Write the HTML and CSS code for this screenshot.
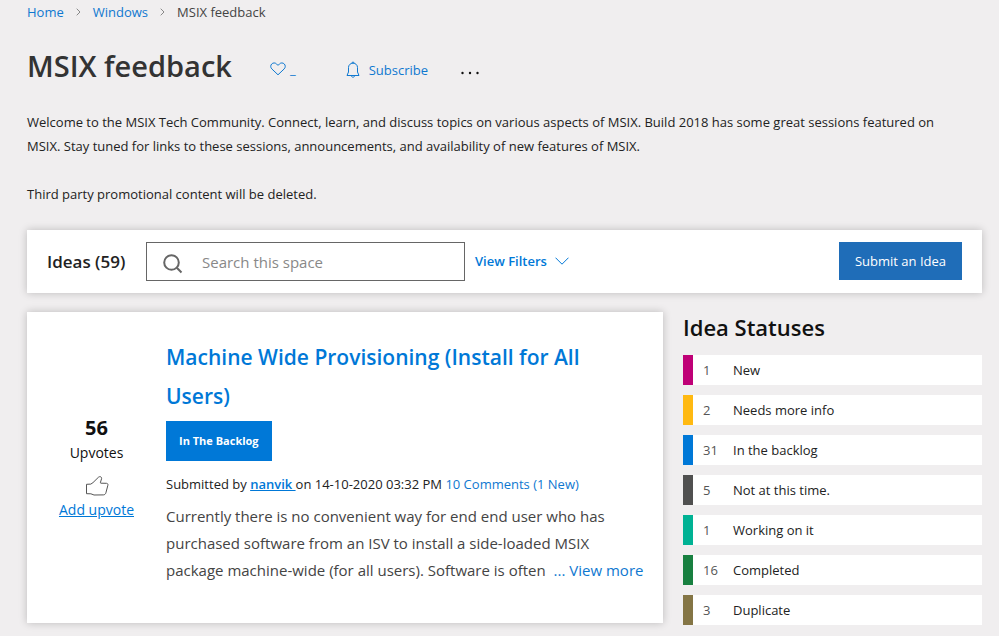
FILE: index.html
```html
<!DOCTYPE html>
<html lang="en">
<head>
<meta charset="utf-8">
<meta name="viewport" content="width=device-width, initial-scale=1">
<title>MSIX feedback</title>
<link rel="stylesheet" href="styles.css">
</head>
<body>
<header class="page-header">
  <nav class="breadcrumb" aria-label="Breadcrumb">
    <a href="#">Home</a>
    <svg width="5" height="8" viewBox="0 0 5 8" aria-hidden="true"><path d="M.7.7 4 4 .7 7.3"/></svg>
    <a href="#">Windows</a>
    <svg width="5" height="8" viewBox="0 0 5 8" aria-hidden="true"><path d="M.7.7 4 4 .7 7.3"/></svg>
    <span>MSIX feedback</span>
  </nav>
  <div class="title-row">
    <h1>MSIX feedback</h1>
    <a class="like" href="#">
      <svg width="16" height="14" viewBox="0 0 16 14" aria-hidden="true"><path d="M8 12.8 1.8 6.9C.4 5.4.4 3.3 1.7 2 3 .6 5.2.6 6.5 1.9L8 3.4l1.5-1.5C10.8.6 13 .6 14.3 2c1.3 1.3 1.3 3.4-.1 4.9z"/></svg>
      <span>_</span>
    </a>
    <a class="subscribe" href="#">
      <svg width="14" height="18" viewBox="0 0 14 18" aria-hidden="true"><path d="M1 14.5h12L11.5 11V6.5C11.5 4 9.6 2.2 7 2.2S2.5 4 2.5 6.5V11zM5.800 2.200C5.800.7 8.200.7 8.200 2.200M5.300 14.700c.3 2 3.100 2 3.400 0"/></svg>
      <span>Subscribe</span>
    </a>
    <button class="more" type="button" aria-label="More options">
      <svg width="20" height="4" viewBox="0 0 20 4" aria-hidden="true"><circle cx="2.500" cy="2" r="1.200"/><circle cx="10" cy="2" r="1.200"/><circle cx="17.500" cy="2" r="1.200"/></svg>
    </button>
  </div>
  <div class="intro">
    <p>Welcome to the MSIX Tech Community. Connect, learn, and discuss topics on various aspects of MSIX. Build 2018 has some great sessions featured on MSIX. Stay tuned for links to these sessions, announcements, and availability of new features of MSIX.</p>
    <p>Third party promotional content will be deleted.</p>
  </div>
</header>
<main>
  <section class="toolbar card">
    <h2>Ideas (59)</h2>
    <label class="search">
      <svg width="20" height="20" viewBox="0 0 20 20" aria-hidden="true"><circle cx="8.500" cy="8.500" r="7.300"/><path d="m13.800 13.800 4.700 4.700"/></svg>
      <input type="search" placeholder="Search this space" aria-label="Search this space">
    </label>
    <button class="filters" type="button">View Filters
      <svg width="14" height="8" viewBox="0 0 14 8" aria-hidden="true"><path d="m.5.7 6.500 6.500L13.500.7"/></svg>
    </button>
    <button class="submit" type="button">Submit an Idea</button>
  </section>
  <div class="columns">
    <article class="idea card">
      <div class="votes">
        <strong>56</strong>
        <span>Upvotes</span>
        <svg width="24" height="20" viewBox="0 0 24 20" aria-hidden="true"><path d="M1.500 8.300 5.800 8.100 8 6.600 13.500 1.200C14.800 0 17 .9 16.600 2.600L15.300 6.800 15.900 7.200 21.500 7.300C22.600 7.400 23.200 8.100 22.900 9.200L20.900 16.800C20.500 18.200 19.500 18.900 18.300 18.900L9 19 5.900 17.800 1.500 17.700z"/></svg>
        <a href="#">Add upvote</a>
      </div>
      <div class="details">
        <h3><a href="#">Machine Wide Provisioning (Install for All Users)</a></h3>
        <a class="badge" href="#">In The Backlog</a>
        <p class="meta">Submitted by <a class="author" href="#">nanvik </a>on 14-10-2020 03:32 PM <a href="#">10 Comments (1 New)</a></p>
        <p class="body">Currently there is no convenient way for end end user who has purchased software from an ISV to install a side-loaded MSIX package machine-wide (for all users). Software is often <a href="#">... View more</a></p>
      </div>
    </article>
    <aside class="statuses">
      <h2>Idea Statuses</h2>
      <ul>
        <li class="new"><span>1</span><a href="#">New</a></li>
        <li class="info"><span>2</span><a href="#">Needs more info</a></li>
        <li class="backlog"><span>31</span><a href="#">In the backlog</a></li>
        <li class="not-now"><span>5</span><a href="#">Not at this time.</a></li>
        <li class="working"><span>1</span><a href="#">Working on it</a></li>
        <li class="completed"><span>16</span><a href="#">Completed</a></li>
        <li class="duplicate"><span>3</span><a href="#">Duplicate</a></li>
      </ul>
    </aside>
  </div>
</main>
</body>
</html>
```
FILE: styles.css
```css
* { box-sizing: border-box; }

body {
  margin: 0;
  padding: 0 17px 12px 27px;
  background: #f0eeef;
  color: #222;
  font: 13px/24px "Segoe UI", "Open Sans", sans-serif;
}

h1, h2, h3, p, ul { margin: 0; padding: 0; font-weight: 600; }
p { font-weight: 400; }
a { color: #0f78d0; text-decoration: none; }
button { border: 0; padding: 0; background: none; font: inherit; cursor: pointer; }
svg { flex: none; fill: none; stroke: currentColor; }

.card { background: #fff; box-shadow: 0 0 8px rgba(0, 0, 0, .22); }

.breadcrumb { display: flex; align-items: center; gap: 12px; color: #444; }
.breadcrumb svg { color: #888; }

.title-row { display: flex; align-items: center; height: 48px; margin-top: 18px; color: #0f78d0; }
.title-row h1 { color: #333; font-size: 29px; line-height: 48px; }
.like { display: flex; align-items: center; gap: 4px; margin: 6px 50px 0 38px; }
.subscribe { display: flex; align-items: center; gap: 9px; margin-top: 8px; }
.more { display: flex; margin: 14px 0 0 32px; color: #111; }
.more svg { fill: currentColor; stroke: none; }

.intro { display: grid; gap: 24px; max-width: 930px; margin-top: 20px; }

.toolbar { display: flex; align-items: center; height: 63px; margin-top: 24px; padding: 0 20px; }
.toolbar h2 { width: 99px; font-size: 17px; }
.search { display: flex; align-items: center; gap: 19px; width: 319px; height: 39px; padding: 0 16px; border: 1px solid #666; color: #666; }
.search svg { margin-top: 4px; stroke-width: 2; }
.search input { flex: 1; min-width: 0; border: 0; padding: 0; outline: 0; background: none; color: #222; font: inherit; font-size: 15px; }
.search input::placeholder { color: #888; opacity: 1; }
.filters { display: flex; align-items: center; gap: 8px; margin: 0 0 2px 10px; color: #0078d7; font-weight: 600; }
.submit { height: 38px; margin: 0 0 2px auto; padding: 0 16px; background: #1f6db8; color: #fff; }

.columns { display: grid; grid-template-columns: minmax(0, 636fr) minmax(0, 299fr); align-items: start; gap: 20px; margin-top: 19px; }

.idea { display: grid; grid-template-columns: 139px minmax(0, 1fr); padding: 26px 16px 39px 0; }
.votes { display: flex; flex-direction: column; align-items: center; padding-top: 77px; color: #111; font-size: 14px; font-weight: 500; }
.votes strong { font-size: 20px; line-height: 26px; font-weight: 700; }
.votes svg { margin: 11px 0 2px; color: #555; }
.votes a { color: #0078d7; text-decoration: underline; }

.details h3 { font-size: 21px; line-height: 39px; }
.details h3 a { color: #0078d7; }
.badge { display: inline-block; margin-top: 5px; padding: 8px 13px; background: #0078d7; color: #fff; font-size: 11px; font-weight: 700; vertical-align: top; }
.meta { margin-top: 11px; }
.meta .author { color: #0078d7; font-weight: 600; text-decoration: underline; }
.body { margin-top: 7px; color: #444; font-size: 15px; line-height: 27px; }
.body a { display: inline-block; margin-left: 4px; }

.statuses h2 { color: #111; font-size: 22px; line-height: 30px; }
.statuses ul { display: grid; gap: 10px; margin-top: 13px; list-style: none; font-weight: 400; }
.statuses li { display: grid; grid-template-columns: 30px 1fr; align-items: center; height: 30px; padding-left: 10px; border-left: 10px solid; background: #fff; }
.statuses li span { color: #555; }
.statuses li a { color: #222; }
.statuses .new { border-color: #bf0077; }
.statuses .info { border-color: #ffb911; }
.statuses .backlog { border-color: #0078d7; }
.statuses .not-now { border-color: #505050; }
.statuses .working { border-color: #00b294; }
.statuses .completed { border-color: #188040; }
.statuses .duplicate { border-color: #847545; }
```
